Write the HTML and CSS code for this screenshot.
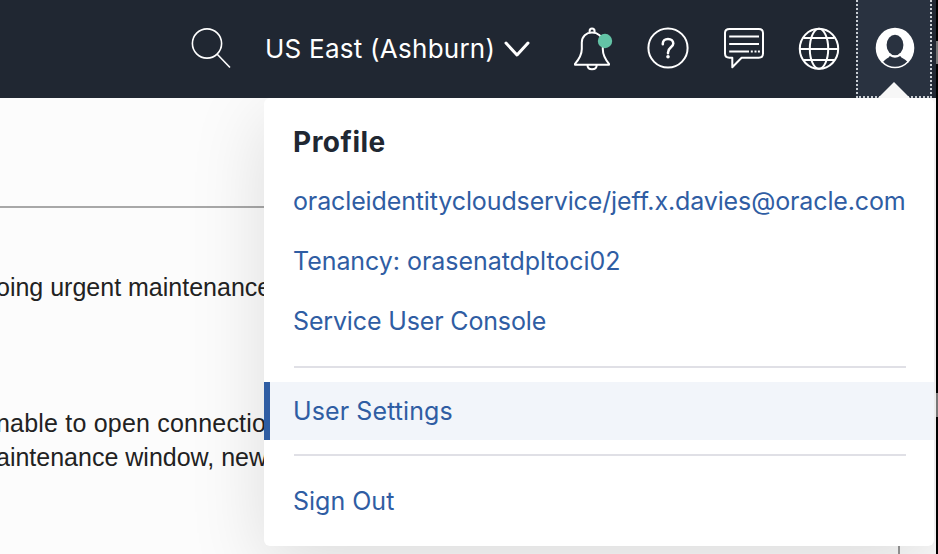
FILE: index.html
```html
<!DOCTYPE html>
<html lang="en">
<head>
<meta charset="utf-8">
<title>Profile menu</title>
<link rel="stylesheet" href="styles.css">
</head>
<body>
<div class="app">
  <header class="topbar">
    <svg class="icon search" viewBox="0 0 44 46"><circle cx="17" cy="17.5" r="14.6"/><path d="M27.2 28.2 40 41.5"/></svg>
    <button class="region"><span class="region-name">US East (Ashburn)</span>
      <svg class="chevron" viewBox="0 0 28 20"><path d="M3 4 14 16 25 4"/></svg>
    </button>
    <svg class="icon bell" viewBox="0 0 44 46"><path d="M17.6 7V5.2C17.6 3.4 18.4 2.6 20 2.6S22.6 3.4 22.6 5.2V7M3 37.8C6.8 33.5 9.8 28.4 9.8 23V16.5C9.8 10.3 14.3 6.6 20 6.6S30.8 10.3 30.8 16.5V23C30.8 28.4 33.4 33.5 37 37.8V38.8H3ZM15.5 39.2C15.5 41.9 17.2 43.2 20 43.2S24.7 41.9 24.7 39.2"/><circle class="dot" cx="33" cy="15" r="7.2"/></svg>
    <svg class="icon help" viewBox="0 0 44 46"><circle cx="22" cy="22" r="19.6"/><path class="mark" d="M16.8 18.3V17.6C16.8 14.9 18.9 13 22 13S27.3 14.9 27.3 17.6C27.3 21.4 22 21.4 22 26.4V27.2"/><circle class="solid" cx="22" cy="30.8" r="1.8"/></svg>
    <svg class="icon chat" viewBox="0 0 44 46"><path d="M7.5 3H36.8Q41 3 41 7V27.6Q41 31.8 36.8 31.8H19.6L10.3 41.2V31.8H7.5Q3 31.8 3 27.6V7Q3 3 7.5 3Z"/><path d="M7.2 10.5H37M7.2 18H37M7.2 25.5H27"/><path d="M28.8 25.5h2m1.7 0h2m1.4 0h2"/></svg>
    <svg class="icon globe" viewBox="0 0 44 46"><ellipse cx="22" cy="22.8" rx="19.2" ry="20"/><ellipse cx="22" cy="22.8" rx="9.2" ry="20"/><path d="M6.3 12H37.7M2.8 23H41.2M6.3 34H37.7"/></svg>
    <div class="account">
      <svg class="avatar" viewBox="0 0 40 42"><ellipse class="disc" cx="20" cy="21" rx="19.3" ry="20.2"/><ellipse class="cut" cx="20" cy="18" rx="8.4" ry="10.3"/><path class="cut" d="M14.8 29Q20 32.5 25.2 29C26.4 31.2 29.7 31.8 32.2 34.4Q27 39.8 20 39.8T8.2 34.7C10.4 31.8 13.7 31.2 14.8 29Z"/></svg>
      <svg class="pointer" viewBox="0 0 32 16"><path d="M0 16 16 0 32 16Z"/></svg>
    </div>
  </header>
  <main class="page">
    <section class="notices">
      <div class="rule"></div>
      <p class="first">oing urgent maintenance</p>
      <p class="second">nable to open connectio</p>
      <p class="third">aintenance window, new</p>
    </section>
    <nav class="menu">
      <h2>Profile</h2>
      <a class="item user">oracleidentitycloudservice/jeff.x.davies@oracle.com</a>
      <a class="item tenancy">Tenancy: orasenatdpltoci02</a>
      <a class="item console">Service User Console</a>
      <hr>
      <a class="item selected">User Settings</a>
      <hr>
      <a class="item signout">Sign Out</a>
    </nav>
    <div class="frame"></div>
  </main>
  <div class="edge"></div>
</div>
</body>
</html>
```
FILE: styles.css
```css
* { box-sizing: border-box; }
body { margin: 0; overflow: hidden; font-family: Inter, "Liberation Sans", sans-serif; }
.app { position: relative; width: 938px; height: 554px; overflow: hidden; background: #fcfcfc; }
.topbar { position: relative; z-index: 2; display: flex; align-items: flex-start; height: 98px; background: #202732; }
.icon { width: 44px; height: 46px; margin-top: 26px; flex: none; fill: none; stroke: #fff; stroke-width: 2; stroke-linejoin: round; }
.search { margin-left: 190px; stroke-width: 1.6; }
.region { display: flex; width: 266px; height: 98px; margin-left: 31px; padding: 0; border: 0; background: none; color: #fff; font: 26px/98px Inter, sans-serif; text-align: left; }
.region-name { width: 239px; white-space: nowrap; letter-spacing: .25px; }
.chevron { width: 28px; height: 20px; margin-top: 39px; flex: none; fill: none; stroke: #fff; stroke-width: 3; stroke-linecap: round; stroke-linejoin: round; }
.bell { margin-left: 41px; }
.bell .dot { fill: #63c3a6; stroke: none; }
.help { margin-left: 30px; }
.help .mark { stroke-width: 2.5; stroke-linecap: round; }
.solid { fill: #fff; stroke: none; }
.chat { margin-left: 32px; }
.globe { margin-left: 31px; }
.account { display: flex; flex-direction: column; align-items: center; width: 76px; height: 98px; margin-left: 15px; border: 2px dotted #c9ced4; border-top: 0; background: #293240; flex: none; }
.avatar { width: 40px; height: 42px; margin: 27px 0 0 2px; flex: none; }
.disc { fill: #fff; }
.cut { fill: #293240; }
.pointer { width: 32px; height: 16px; margin-top: 13px; flex: none; fill: #f7f7f7; }
.page { display: flex; height: 456px; }
.notices { width: 264px; flex: none; white-space: nowrap; color: #222; font: 25px/34px "Liberation Sans", sans-serif; }
.notices p { margin: 0 0 0 -4px; }
.rule { height: 2px; margin-top: 108px; background: #a8a8a8; }
.notices .first { margin-top: 62px; }
.notices .second { margin-top: 102px; letter-spacing: .2px; }
.menu { position: relative; width: 670px; height: 448px; flex: none; padding-top: 14px; border-radius: 6px; background: #fff; box-shadow: 0 20px 76px rgba(0, 0, 0, .13); }
.menu h2 { height: 60px; margin: 0 29px; color: #202732; font-size: 28px; font-weight: 700; line-height: 60px; letter-spacing: .5px; }
.item { display: block; height: 60px; padding-left: 29px; color: #2f5da3; font-size: 25px; line-height: 58px; white-space: nowrap; }
.user { letter-spacing: -.125px; }
.tenancy { letter-spacing: -.05px; }
.console { letter-spacing: -.15px; }
.menu hr { height: 2px; margin: 14px 28px 14px 30px; border: 0; background: #e0e0e6; }
.menu .selected { height: 58px; padding-left: 23px; border-left: 6px solid #2f5da3; background: #f2f5fa; line-height: 59px; letter-spacing: .1px; }
.signout { margin-top: 16px; }
.frame { align-self: flex-end; width: 2px; height: 8px; margin-left: -36px; background: #999; flex: none; }
.edge { position: absolute; z-index: 3; top: 0; right: 0; width: 2px; height: 554px; background: linear-gradient(#000 41px, #777 41px 64px, #000 64px 393px, #777 393px 417px, #000 417px); }
```
